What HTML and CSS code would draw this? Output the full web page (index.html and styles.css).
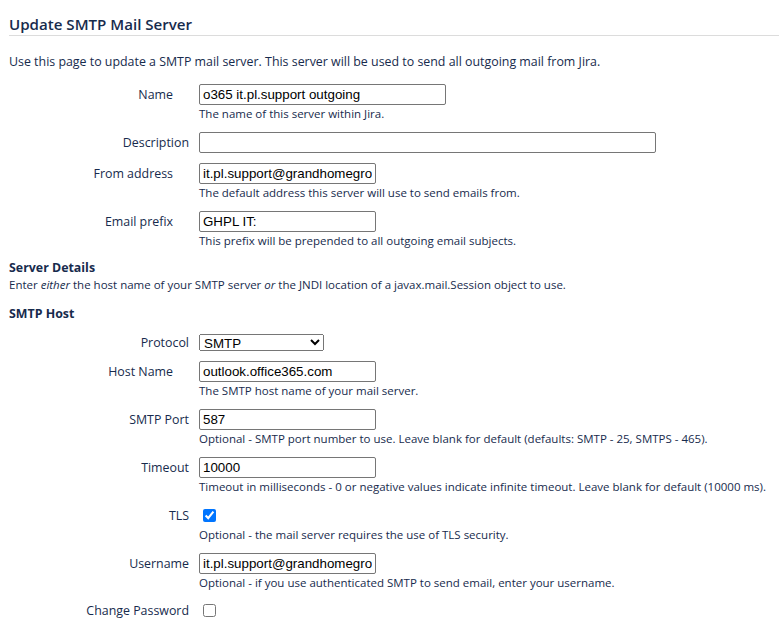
FILE: index.html
```html
<!DOCTYPE html>
<html lang="en">
    <head>
        <meta charset="utf-8">
        <title>Update SMTP Mail Server</title>
        <link rel="stylesheet" href="styles.css">
    </head>
    <body>
        <div class="page">
            <h2 class="page-title">Update SMTP Mail Server</h2>
            <p class="intro">Use this page to update a SMTP mail server. This server will be used to send all outgoing mail from Jira.</p>

            <form class="mail-form">
                <!-- general server settings -->
                <div class="field-group">
                    <label>Name<span class="required"></span></label>
                    <div class="field">
                        <input class="text medium" type="text" value="o365 it.pl.support outgoing">
                        <div class="description">The name of this server within Jira.</div>
                    </div>
                </div>
                <div class="field-group">
                    <label>Description</label>
                    <div class="field">
                        <input class="text long" type="text" value="">
                    </div>
                </div>
                <div class="field-group">
                    <label>From address<span class="required"></span></label>
                    <div class="field">
                        <input class="text short" type="text" value="it.pl.support@grandhomegroup.com">
                        <div class="description">The default address this server will use to send emails from.</div>
                    </div>
                </div>
                <div class="field-group">
                    <label>Email prefix<span class="required"></span></label>
                    <div class="field">
                        <input class="text short" type="text" value="GHPL IT:">
                        <div class="description">This prefix will be prepended to all outgoing email subjects.</div>
                    </div>
                </div>

                <h3 class="section-title">Server Details</h3>
                <div class="section-note">Enter <em>either</em> the host name of your SMTP server <em>or</em> the JNDI location of a javax.mail.Session object to use.</div>

                <h3 class="section-title host-title">SMTP Host</h3>
                <div class="field-group">
                    <label class="select-label">Protocol</label>
                    <div class="field">
                        <select class="select">
                            <option selected>SMTP</option>
                            <option>SECURE_SMTP</option>
                        </select>
                    </div>
                </div>
                <div class="field-group">
                    <label>Host Name<span class="required"></span></label>
                    <div class="field">
                        <input class="text short" type="text" value="outlook.office365.com">
                        <div class="description">The SMTP host name of your mail server.</div>
                    </div>
                </div>
                <div class="field-group">
                    <label>SMTP Port</label>
                    <div class="field">
                        <input class="text short" type="text" value="587">
                        <div class="description">Optional - SMTP port number to use. Leave blank for default (defaults: SMTP - 25, SMTPS - 465).</div>
                    </div>
                </div>
                <div class="field-group">
                    <label>Timeout</label>
                    <div class="field">
                        <input class="text short" type="text" value="10000">
                        <div class="description">Timeout in milliseconds - 0 or negative values indicate infinite timeout. Leave blank for default (10000 ms).</div>
                    </div>
                </div>
                <div class="field-group">
                    <label>TLS</label>
                    <div class="field">
                        <div class="check-row"><input type="checkbox" checked></div>
                        <div class="description">Optional - the mail server requires the use of TLS security.</div>
                    </div>
                </div>
                <div class="field-group">
                    <label>Username</label>
                    <div class="field">
                        <input class="text short" type="text" value="it.pl.support@grandhomegroup.com">
                        <div class="description">Optional - if you use authenticated SMTP to send email, enter your username.</div>
                    </div>
                </div>
                <div class="field-group">
                    <label class="check-label">Change Password</label>
                    <div class="field">
                        <div class="check-row short-row"><input type="checkbox"></div>
                    </div>
                </div>
            </form>
        </div>
    </body>
</html>
```

FILE: styles.css
```css
/* page wide text settings */
body{
    font-family: "Open Sans", "Noto Sans", Arial, sans-serif;
    font-size: 12.4px;
    color: #172b4d;
    background-color: white;
    margin: 0;
}
.page{
    padding-left: 9px;
}
/* title with the thin grey rule under it */
.page-title{
    margin: 0;
    padding-top: 14px;
    font-size: 15.1px;
    font-weight: 600;
    line-height: 20px;
    padding-bottom: 1px;
    border-bottom: 1px solid #dcdcdc;
}
.intro{
    margin: 16px 0 7px;
    line-height: 20px;
}
/* each row: label on the left, control and help text on the right */
.field-group{
    display: grid;
    grid-template-columns: 180px 1fr;
    column-gap: 10px;
    padding: 5px 0;
}
.field-group label{
    text-align: right;
    line-height: 21px;
}
.field-group label.select-label{
    line-height: 17px;
}
.field-group label.check-label{
    line-height: 19px;
}
/* the required marker icon does not load, it only keeps its space */
.required{
    display: inline-block;
    width: 16px;
}
.text{
    box-sizing: border-box;
    height: 21px;
    padding: 1px 3px;
    font-family: "Liberation Sans", Arial, sans-serif;
    font-size: 13.333px;
    color: black;
    border: 1px solid #767676;
    border-radius: 2px;
    margin: 0;
    display: block;
}
.short{
    width: 177px;
}
.medium{
    width: 247px;
}
.long{
    width: 457px;
}
.select{
    box-sizing: border-box;
    width: 125px;
    height: 17px;
    font-family: "Liberation Sans", Arial, sans-serif;
    font-size: 13.333px;
    margin: 0;
    display: block;
}
.check-row{
    height: 21px;
    display: flex;
    align-items: center;
}
.short-row{
    height: 19px;
}
.check-row input{
    margin: 0 0 0 4px;
    width: 13px;
    height: 13px;
}
.description{
    font-size: 11.5px;
    line-height: 16px;
    margin-top: 1px;
}
.section-title{
    margin: 5px 0 0;
    font-size: 12.4px;
    font-weight: 700;
    line-height: 18px;
}
.host-title{
    margin-top: 12px;
    margin-bottom: 6px;
}
.section-note{
    font-size: 11.5px;
    line-height: 16px;
}
```
